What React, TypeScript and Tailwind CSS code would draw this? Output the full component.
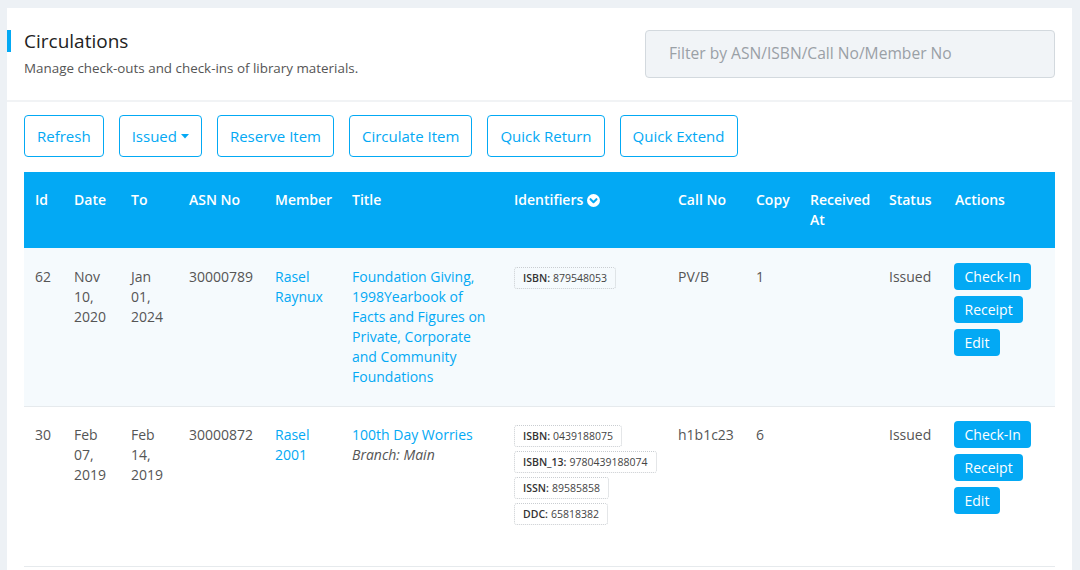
import React from "react";

const cols =
  "grid grid-cols-[39px_57px_58px_86px_77px_162px_164px_78px_54px_79px_66px_111px]";

function Badge({ label, value }: { label: string; value: string }) {
  return (
    <div className="flex">
      <span className="inline-flex h-[22px] items-center rounded-[3px] border border-dotted border-[#c9cdd1] px-[8px] text-[10.5px] text-[#444]">
        <span className="font-semibold text-[#333]">{label}:</span>
        <span className="ml-[3px]">{value}</span>
      </span>
    </div>
  );
}

function ActionBtns() {
  return (
    <div className="-ml-px flex flex-col items-start gap-[6px]">
      {["Check-In", "Receipt", "Edit"].map((t) => (
        <button
          key={t}
          className="h-[27px] rounded-[4px] bg-[#03a9f4] px-[10.5px] text-[14px] leading-[27px] text-white"
        >
          {t}
        </button>
      ))}
    </div>
  );
}

export default function App() {
  const buttons = ["Refresh", "Issued", "Reserve Item", "Circulate Item", "Quick Return", "Quick Extend"];
  const headers = ["Id", "Date", "To", "ASN No", "Member", "Title", "Identifiers", "Call No", "Copy", "Received At", "Status", "Actions"];
  const cell = "px-[11px] pt-[19px]";
  const cell2 = "px-[11px] pt-[18px]";
  return (
    <div className="min-h-screen bg-[#edf1f5] pl-[7px] pr-[8px] pt-[8px] font-['Open_Sans',sans-serif] text-[14px] text-[#555]">
      <div className="bg-white pb-[20px]">
        <div className="flex items-start justify-between pb-[22px] pt-[22px]">
          <div>
            <h1 className="border-l-4 border-[#03a9f4] pl-[13px] text-[19px] leading-[22px] text-[#222]">
              Circulations
            </h1>
            <p className="mt-[7px] pl-[17px] text-[13.4px] leading-[18px] text-[#555]">
              Manage check-outs and check-ins of library materials.
            </p>
          </div>
          <div className="mr-[17px] flex h-[48px] w-[410px] items-center rounded-[4px] border border-[#d3d9de] bg-[#f1f4f7] pl-[23px] text-[15.6px] text-[#9aa0a6]">
            Filter by ASN/ISBN/Call No/Member No
          </div>
        </div>
        <div className="h-[2px] bg-[#f1f3f5]" />
        <div className="px-[17px] pt-[13px]">
          <div className="flex gap-[15px]">
            {buttons.map((b) => (
              <button
                key={b}
                className="flex h-[42px] items-center rounded-[4px] border border-[#03a9f4] px-[12px] text-[15px] text-[#03a9f4]"
              >
                {b}
                {b === "Issued" && (
                  <svg width="8" height="5" viewBox="0 0 8 5" className="ml-[4px]">
                    <path d="M0 0 L8 0 L4 4.5 Z" fill="#03a9f4" />
                  </svg>
                )}
              </button>
            ))}
          </div>
          <div className="mt-[15px]">
            <div className={`${cols} h-[76px] bg-[#03a9f4] text-[14px] font-semibold leading-[20px] text-white`}>
              {headers.map((h) => (
                <div key={h} className="px-[11px] pt-[18px]">
                  {h === "Identifiers" ? (
                    <span className="flex items-center">
                      Identifiers
                      <svg width="13" height="13" viewBox="0 0 14 14" className="ml-[4px]">
                        <circle cx="7" cy="7" r="7" fill="#fff" />
                        <path d="M3.8 5.6 L7 8.8 L10.2 5.6" fill="none" stroke="#03a9f4" strokeWidth="2.2" strokeLinecap="round" strokeLinejoin="round" />
                      </svg>
                    </span>
                  ) : (
                    h
                  )}
                </div>
              ))}
            </div>
            {/* Row 1 */}
            <div className={`${cols} h-[158px] bg-[#f5fafd] leading-[20px]`}>
              <div className={cell}>62</div>
              <div className={cell}>Nov 10, 2020</div>
              <div className={cell}>Jan 01, 2024</div>
              <div className={cell}>30000789</div>
              <div className={`${cell} text-[#03a9f4]`}>Rasel Raynux</div>
              <div className={`${cell} text-[#03a9f4]`}>
                Foundation Giving, 1998Yearbook of Facts and Figures on Private, Corporate and Community Foundations
              </div>
              <div className={cell}>
                <Badge label="ISBN" value="879548053" />
              </div>
              <div className={cell}>PV/B</div>
              <div className={cell}>1</div>
              <div className={cell}></div>
              <div className={cell}>Issued</div>
              <div className="px-[11px] pt-[15px]">
                <ActionBtns />
              </div>
            </div>
            {/* Row 2 */}
            <div className={`${cols} h-[161px] border-y border-[#e6eaed] bg-white leading-[20px]`}>
              <div className={cell2}>30</div>
              <div className={cell2}>Feb 07, 2019</div>
              <div className={cell2}>Feb 14, 2019</div>
              <div className={cell2}>30000872</div>
              <div className={`${cell2} text-[#03a9f4]`}>Rasel 2001</div>
              <div className={cell2}>
                <div className="text-[#03a9f4]">100th Day Worries</div>
                <div className="italic text-[#555]">Branch: Main</div>
              </div>
              <div className={`${cell2} flex flex-col gap-[4px]`}>
                <Badge label="ISBN" value="0439188075" />
                <Badge label="ISBN_13" value="9780439188074" />
                <Badge label="ISSN" value="89585858" />
                <Badge label="DDC" value="65818382" />
              </div>
              <div className={cell2}>h1b1c23</div>
              <div className={cell2}>6</div>
              <div className={cell2}></div>
              <div className={cell2}>Issued</div>
              <div className="px-[11px] pt-[14px]">
                <ActionBtns />
              </div>
            </div>
          </div>
        </div>
      </div>
    </div>
  );
}
